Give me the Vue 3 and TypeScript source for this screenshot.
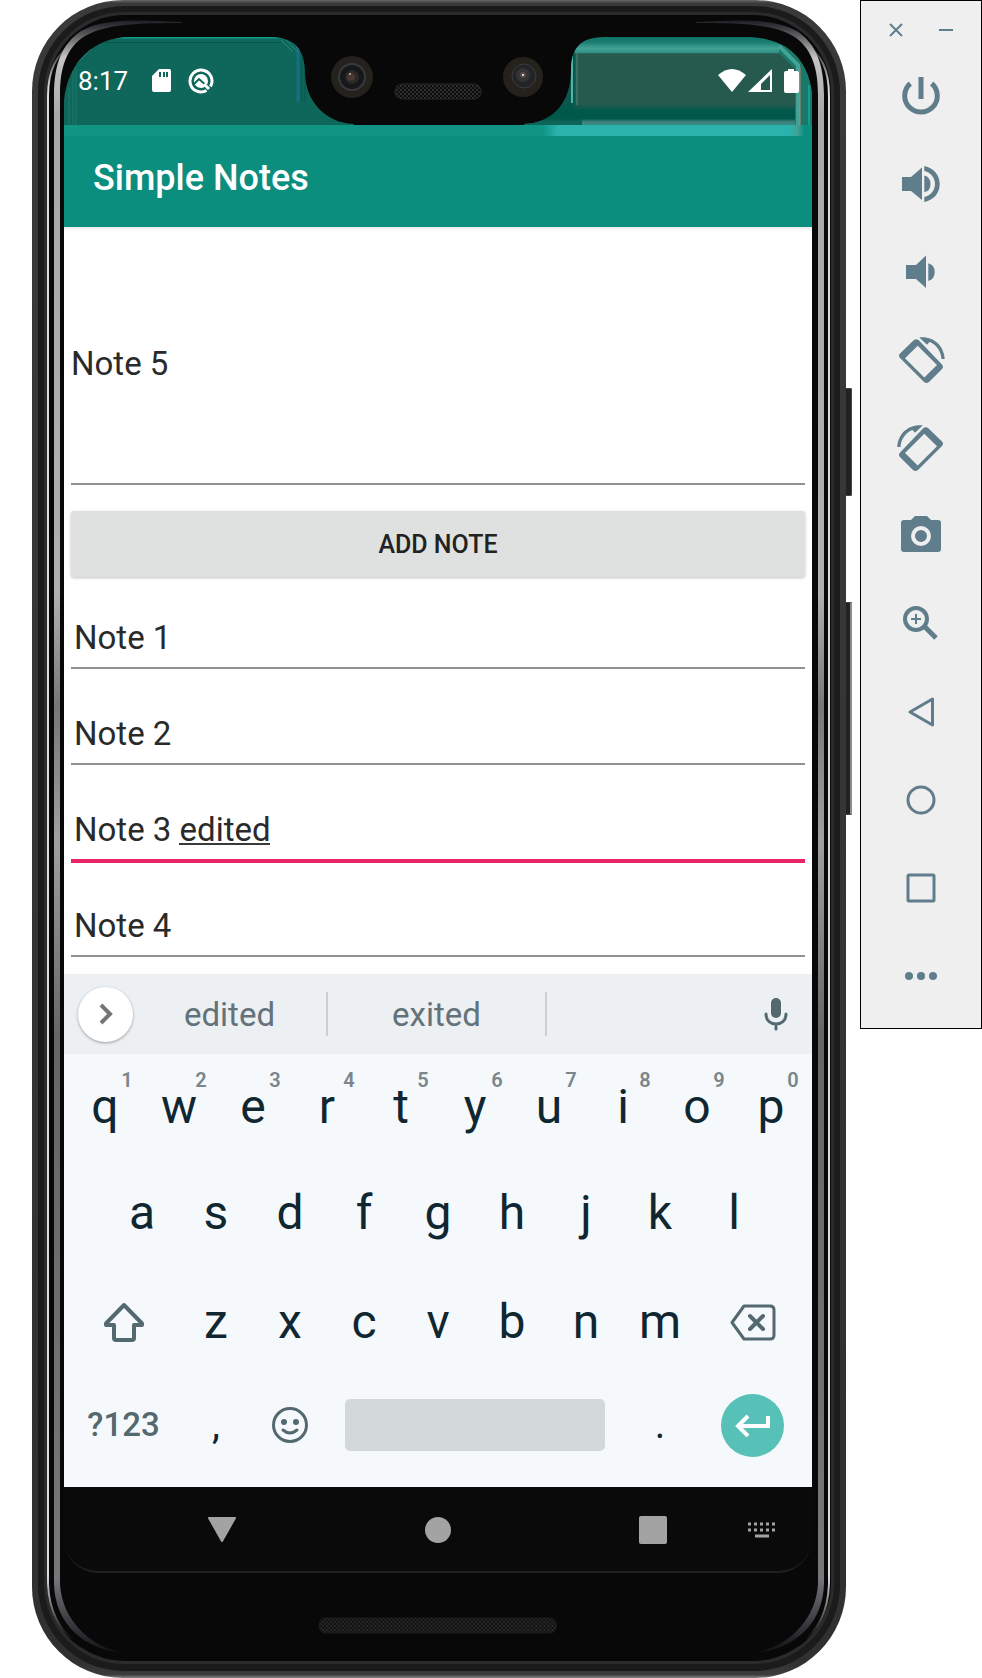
<script setup lang="ts">
import { ref } from 'vue'

interface Note {
  id: number
  text: string
  composing?: boolean
}

interface Key {
  label: string
  hint?: string
}

const draft = ref('Note 5')
const notes = ref<Note[]>([
  { id: 1, text: 'Note 1' },
  { id: 2, text: 'Note 2' },
  { id: 3, text: 'Note 3 edited', composing: true },
  { id: 4, text: 'Note 4' },
])

const topRow: Key[] = 'qwertyuiop'.split('').map((label, i) => ({ label, hint: String((i + 1) % 10) }))
const middleRow = 'asdfghjkl'.split('')
const bottomRow = 'zxcvbnm'.split('')

const tools = [
  'Power',
  'Volume up',
  'Volume down',
  'Rotate left',
  'Rotate right',
  'Take screenshot',
  'Zoom',
  'Back',
  'Home',
  'Overview',
  'More',
]

function addNote() {
  if (draft.value.trim()) {
    notes.value.push({ id: notes.value.length + 1, text: draft.value })
  }
}
</script>

<template>
  <div class="emulator">
    <div class="phone">
      <span class="side-button power-button"></span>
      <span class="side-button volume-button"></span>
      <svg class="bezel" viewBox="0 0 814 1678" preserveAspectRatio="none" aria-hidden="true">
        <defs>
          <linearGradient id="rim" gradientUnits="userSpaceOnUse" x1="0" y1="0" x2="0" y2="1678">
            <stop offset="0" stop-color="#686868" />
            <stop offset=".002" stop-color="#3a3a3a" />
            <stop offset=".99" stop-color="#303030" />
            <stop offset=".998" stop-color="#3c3c3c" />
            <stop offset="1" stop-color="#858585" />
          </linearGradient>
          <linearGradient id="shine" gradientUnits="userSpaceOnUse" x1="0" y1="18" x2="0" y2="1660">
            <stop offset="0" stop-color="#15151a" />
            <stop offset=".006" stop-color="#3a3a40" />
            <stop offset=".024" stop-color="#c4c4c4" />
            <stop offset=".06" stop-color="#a8a8a8" />
            <stop offset=".35" stop-color="#b0b0b0" />
            <stop offset=".42" stop-color="#777" />
            <stop offset=".5" stop-color="#a0a0a0" />
            <stop offset=".62" stop-color="#666" />
            <stop offset=".95" stop-color="#77777b" />
            <stop offset=".98" stop-color="#34343a" />
            <stop offset="1" stop-color="#08080a" />
          </linearGradient>
          <linearGradient id="edge" gradientUnits="userSpaceOnUse" x1="0" y1="40" x2="0" y2="1640">
            <stop offset="0" stop-color="#080808" />
            <stop offset=".03" stop-color="#ddd" />
            <stop offset=".96" stop-color="#ddd" />
            <stop offset="1" stop-color="#080808" />
          </linearGradient>
        </defs>
        <rect width="814" height="1678" rx="91" fill="url(#rim)" />
        <rect x="6" y="6" width="802" height="1665" rx="86" fill="#1b1b1b" />
        <rect x="12" y="12" width="790" height="1652" rx="80" fill="#2b2b2b" />
        <rect x="15" y="15" width="784" height="1646" rx="78" fill="#080808" />
        <path d="M44 40C24 54 16 70 16 96V1584C17 1612 28 1632 48 1646" fill="none" stroke="url(#edge)" stroke-width="2" />
        <path d="M770 40C790 54 797 70 797 96V1584C796 1612 786 1632 766 1646" fill="none" stroke="url(#edge)" stroke-width="2" />
        <path d="M150 22C105 20 72 18 49 31C30 44 22 64 22 95V1584C23 1624 52 1650 92 1653C58 1647 30 1620 28 1584V95C28 68 34 48 53 36C74 24 105 23 150 23Z" fill="url(#shine)" />
        <path d="M664 22C709 20 742 18 765 31C784 44 792 64 792 95V1584C791 1624 762 1650 722 1653C756 1647 784 1620 786 1584V95C786 68 780 48 761 36C740 24 709 23 664 23Z" fill="url(#shine)" />
      </svg>

      <div class="screen">
        <header class="status-bar">
          <svg class="cutout" viewBox="0 0 748 88" preserveAspectRatio="none" aria-hidden="true">
            <defs>
              <clipPath id="leftEar"><path d="M0 88V63C4 25 30 0 66 0H206C232 0 241 14 241 36C241 62 260 86 290 87V88Z" /></clipPath>
              <clipPath id="rightEar"><path d="M748 88V56C744 22 722 0 682 0H540C514 0 507 14 507 34C507 64 490 86 460 87V88Z" /></clipPath>
              <pattern id="mesh" width="4" height="4" patternUnits="userSpaceOnUse">
                <rect width="4" height="4" fill="#0c0c0c" />
                <circle cx="1" cy="1" r="1" fill="#3a3a3a" /><circle cx="3" cy="3" r="1" fill="#333" />
              </pattern>
              <linearGradient id="earRight" x1="0" y1="0" x2="0" y2="1">
                <stop offset="0" stop-color="#0f7468" />
                <stop offset=".06" stop-color="#1b7d70" />
                <stop offset=".09" stop-color="#2c8d80" />
                <stop offset=".13" stop-color="#43a294" />
                <stop offset=".18" stop-color="#2f8f82" />
                <stop offset=".19" stop-color="#265a4e" />
                <stop offset=".76" stop-color="#265a4e" />
                <stop offset=".84" stop-color="#00584b" />
                <stop offset=".93" stop-color="#00584b" />
                <stop offset=".96" stop-color="#3a8079" />
                <stop offset="1" stop-color="#3a8c86" />
              </linearGradient>
            </defs>
            <g clip-path="url(#leftEar)">
              <rect width="300" height="88" fill="#0f665a" />
              <path d="M0 .5H240" stroke="#0fa08f" stroke-width="2" />
              <path d="M20 5.500H217" stroke="#07574c" stroke-width="1" />
              <path d="M5 88V50M9 88V34M12 88V30" stroke="#1c7a6c" stroke-width="1" />
              <path d="M234 10V65" stroke="#147080" stroke-width="3" />
              <path d="M238 15V65M241 20V65" stroke="#07574c" stroke-width="1" />
              <path d="M217 3L229 15M222 3L234 15M227 3L238 15" stroke="#238a7c" stroke-width="1" />
              <path d="M9 30L31 8" stroke="#2a7d70" stroke-width="1" />
            </g>
            <g clip-path="url(#rightEar)">
              <rect x="450" width="298" height="88" fill="url(#earRight)" />
              <path d="M450 88V0H511V70L518 74V88Z" fill="#00584b" opacity=".75" />
              <path d="M508 18V66" stroke="#52b3a6" stroke-width="2" />
              <path d="M513 16V68" stroke="#3c6e62" stroke-width="2" />
              <path d="M715 16L731 32V88H748V0H715Z" fill="#18786b" />
              <path d="M715 9L734 28V88" fill="none" stroke="#43a294" stroke-width="4" />
              <path d="M736 30V88" stroke="#b5866f" stroke-width="1" />
              <path d="M745 48V88" stroke="#0ac6b6" stroke-width="1" />
            </g>
            <circle cx="288" cy="40" r="21" fill="#25211c" />
            <circle cx="288" cy="40" r="13" fill="#17181a" stroke="#38393d" stroke-width="2" />
            <circle cx="288" cy="40" r="7" fill="#2b2928" />
            <circle cx="287" cy="40" r="4" fill="#4a3830" /><circle cx="286" cy="37" r="1" fill="#bba" />
            <circle cx="459" cy="40" r="20" fill="#25211c" />
            <circle cx="460" cy="39" r="12" fill="#222427" stroke="#3a3b3e" stroke-width="1" />
            <circle cx="459" cy="38" r="7" fill="#343335" />
            <circle cx="459" cy="38" r="3" fill="#5a4a44" /><circle cx="459" cy="38" r="1" fill="#fff" />
            <rect x="331" y="47" width="86" height="15" rx="7" fill="url(#mesh)" stroke="#262626" />
          </svg>
          <time class="clock">8:17</time>
          <svg class="status-icon" viewBox="0 0 20 24" width="20" height="24" aria-hidden="true">
            <path d="M7 0H17Q19 0 19 2V21Q19 23 17 23H2Q0 23 0 21V7Z" fill="#fff" />
            <path d="M7 3H9V8H7ZM11 3H13V8H11ZM14 3H16V8H14Z" fill="#0f665a" />
          </svg>
          <svg class="status-icon sync" viewBox="0 0 26 26" width="26" height="26" aria-hidden="true">
            <path d="M18.500 22.500A11 11 0 1 1 22.500 18.500" fill="none" stroke="#fff" stroke-width="3" />
            <circle cx="13" cy="13" r="7" fill="#fff" />
            <path d="M5 17L11 11L20 19" fill="none" stroke="#0f665a" stroke-width="2" />
            <path d="M16 16L21 21" stroke="#fff" stroke-width="3" />
          </svg>
          <svg class="status-icon signals" viewBox="0 0 81 24" width="81" height="24" aria-hidden="true">
            <path d="M0 6Q14 -6 28 6L14 23Z" fill="#fff" />
            <path d="M54 0V23H30Z" fill="#fff" />
            <path d="M52 6V21H43V15Z" fill="#265a4e" />
            <path d="M70 0H76V2H79Q81 2 81 4V22Q81 24 79 24H68Q66 24 66 22V4Q66 2 68 2H70Z" fill="#fff" />
          </svg>
        </header>

        <div class="app-bar">
          <h1>Simple Notes</h1>
        </div>

        <main class="notes">
          <input v-model="draft" class="draft" type="text" aria-label="New note" />
          <button class="add" type="button" @click="addNote">ADD NOTE</button>
          <ul class="list">
            <li v-for="note in notes" :key="note.id" class="row" :class="{ composing: note.composing }">
              <input v-model="note.text" class="note" type="text" :aria-label="'Note ' + note.id" />
              <span v-if="note.composing" class="composing-line"></span>
            </li>
          </ul>
        </main>

        <section class="keyboard" aria-label="Keyboard">
          <div class="suggestions">
            <button class="expand" type="button" aria-label="More tools">
              <svg viewBox="0 0 14 22" width="14" height="22"><path d="M2 2L11 11L2 20" fill="none" stroke="#757575" stroke-width="4" /></svg>
            </button>
            <button class="suggestion" type="button">edited</button>
            <button class="suggestion" type="button">exited</button>
            <button class="mic" type="button" aria-label="Voice input">
              <svg viewBox="0 0 24 34" width="24" height="34">
                <rect x="7" y="1" width="10" height="20" rx="5" fill="#546870" />
                <path d="M2 17C2 24 7 27 12 27S22 24 22 17M12 27V32" fill="none" stroke="#546870" stroke-width="3" stroke-linecap="round" />
              </svg>
            </button>
          </div>
          <div class="keys">
            <div class="key-row">
              <button v-for="key in topRow" :key="key.label" class="key" type="button">
                {{ key.label }}<sup class="hint">{{ key.hint }}</sup>
              </button>
            </div>
            <div class="key-row middle">
              <button v-for="key in middleRow" :key="key" class="key" type="button">{{ key }}</button>
            </div>
            <div class="key-row third">
              <button class="key wide" type="button" aria-label="Shift">
                <svg viewBox="0 0 42 42" width="42" height="42">
                  <path d="M21 4L39 22.500V24H31V37Q31 39 29 39H13Q11 39 11 37V24H3V22.500Z" fill="none" stroke="#546870" stroke-width="4" stroke-linejoin="round" />
                </svg>
              </button>
              <button v-for="key in bottomRow" :key="key" class="key" type="button">{{ key }}</button>
              <button class="key wide" type="button" aria-label="Backspace">
                <svg viewBox="0 0 46 38" width="46" height="38">
                  <path d="M14 3H40Q44 3 44 7V32Q44 36 40 36H14L2 19.500Z" fill="none" stroke="#546870" stroke-width="3" stroke-linejoin="round" />
                  <path d="M20 13L33 26M33 13L20 26" stroke="#546870" stroke-width="4" stroke-linecap="round" />
                </svg>
              </button>
            </div>
            <div class="key-row">
              <button class="key wide symbols" type="button">?123</button>
              <button class="key punctuation" type="button">,</button>
              <button class="key" type="button" aria-label="Emoji">
                <svg viewBox="0 0 38 38" width="38" height="38">
                  <circle cx="19" cy="19" r="16.500" fill="none" stroke="#546870" stroke-width="3" />
                  <circle cx="13" cy="16" r="3" fill="#546870" /><circle cx="25" cy="16" r="3" fill="#546870" />
                  <path d="M12 24Q19 30 26 24" fill="none" stroke="#546870" stroke-width="3" stroke-linecap="round" />
                </svg>
              </button>
              <button class="key space" type="button" aria-label="Space"><span class="space-bar"></span></button>
              <button class="key punctuation" type="button">.</button>
              <button class="key wide" type="button" aria-label="Enter">
                <span class="enter">
                  <svg viewBox="0 0 36 24" width="36" height="24"><path d="M13 3L3 13L13 23M4 13H33V3" fill="none" stroke="#fff" stroke-width="4" /></svg>
                </span>
              </button>
            </div>
          </div>
        </section>

        <nav class="nav-bar" aria-label="System navigation">
          <button class="nav back" type="button" aria-label="Hide keyboard">
            <svg viewBox="0 0 30 26" width="30" height="26"><path d="M2 1H28L15 24Z" fill="#a3a3a3" stroke="#a3a3a3" stroke-width="2" stroke-linejoin="round" /></svg>
          </button>
          <button class="nav home" type="button" aria-label="Home">
            <svg viewBox="0 0 28 28" width="28" height="28"><circle cx="14" cy="14" r="13" fill="#a3a3a3" /></svg>
          </button>
          <button class="nav recents" type="button" aria-label="Recent apps">
            <svg viewBox="0 0 28 28" width="28" height="28"><rect width="28" height="28" rx="2" fill="#a3a3a3" /></svg>
          </button>
          <button class="nav switcher" type="button" aria-label="Switch keyboard">
            <svg viewBox="0 0 28 16" width="28" height="16">
              <path d="M0 2H28M0 8H28" stroke="#a3a3a3" stroke-width="3" stroke-dasharray="3 3" />
              <path d="M7 14H21" stroke="#a3a3a3" stroke-width="3" />
            </svg>
          </button>
        </nav>
      </div>

      <div class="chin">
        <svg class="speaker" viewBox="0 0 238 17" preserveAspectRatio="none" aria-hidden="true">
          <defs>
            <pattern id="grille" width="4" height="4" patternUnits="userSpaceOnUse">
              <rect width="4" height="4" fill="#111" />
              <circle cx="1" cy="1" r="1" fill="#2e2e2e" /><circle cx="3" cy="3" r="1" fill="#2a2a2a" />
            </pattern>
          </defs>
          <rect x="1" y="1" width="236" height="15" rx="7" fill="url(#grille)" stroke="#1c1c1c" />
        </svg>
      </div>
    </div>

    <aside class="toolbar" aria-label="Emulator controls">
      <div class="window-controls">
        <button type="button" aria-label="Close">
          <svg viewBox="0 0 14 14" width="14" height="14"><path d="M1 1L13 13M13 1L1 13" stroke="#607d8b" stroke-width="2" /></svg>
        </button>
        <button type="button" aria-label="Minimize">
          <svg viewBox="0 0 14 14" width="14" height="14"><path d="M0 7H14" stroke="#607d8b" stroke-width="2" /></svg>
        </button>
      </div>
      <button v-for="tool in tools" :key="tool" class="tool" type="button" :aria-label="tool">
        <svg viewBox="0 0 50 50" width="50" height="50" fill="#607d8b" stroke="none">
          <path v-if="tool === 'Power'" d="M14.300 12.500A16.300 16.300 0 1 0 35.700 12.500M25 6V28" fill="none" stroke="#607d8b" stroke-width="5" />
          <path v-else-if="tool === 'Volume up'" d="M6 18H15L26 8.500V41L15 32H6ZM28.300 16.500Q34.500 18 34.500 25T28.300 33ZM28.300 7C38 9 43.700 16 43.700 25S38 41 28.300 43V38C35 36.500 39 31 39 25S35 13.500 28.300 12Z" />
          <path v-else-if="tool === 'Volume down'" d="M10 18H20L30 8.500V41L20 32H10ZM32.300 16.300Q38.700 18 38.700 25T32.300 34Z" />
          <g v-else-if="tool === 'Rotate left' || tool === 'Rotate right'" :transform="tool === 'Rotate right' ? 'matrix(-1 0 0 1 50 0)' : undefined">
            <path fill-rule="evenodd" d="M18 5Q20 3.500 22.500 5L46 29.500Q48 32 46 34L33 47Q30.500 49 28 47L4 23Q2 20.500 4 18.500ZM21.700 10.700L9 23.300L28.300 42.500L41 30Z" />
            <path d="M23.300 2.500C38 1 48 11 48.700 24H45.500C45 16 40 9.500 33.500 7L31 9.700Z" />
          </g>
          <g v-else-if="tool === 'Take screenshot'">
            <path d="M15 9L19 5H31L35 9H42Q45 9 45 12V38Q45 41 42 41H8Q5 41 5 38V12Q5 9 8 9Z" />
            <circle cx="25" cy="25" r="8" fill="none" stroke="#efefef" stroke-width="4" />
          </g>
          <g v-else-if="tool === 'Zoom'" fill="none" stroke="#607d8b">
            <circle cx="20" cy="20" r="11" stroke-width="4" />
            <path d="M20 15V25M15 20H25" stroke-width="2" />
            <path d="M28 27L40 39" stroke-width="5" />
          </g>
          <path v-else-if="tool === 'Back'" d="M14 25L36.500 12V38Z" fill="none" stroke="#607d8b" stroke-width="3" stroke-linejoin="round" />
          <circle v-else-if="tool === 'Home'" cx="25" cy="25" r="13" fill="none" stroke="#607d8b" stroke-width="3" />
          <rect v-else-if="tool === 'Overview'" x="12" y="12" width="26" height="26" rx="1" fill="none" stroke="#607d8b" stroke-width="3" />
          <g v-else><circle cx="13" cy="25" r="4" /><circle cx="25" cy="25" r="4" /><circle cx="37" cy="25" r="4" /></g>
        </svg>
      </button>
    </aside>
  </div>
</template>

<style>
body {
  margin: 0;
  background: #fff;
}
</style>

<style scoped>
.emulator {
  display: flex;
  align-items: flex-start;
  gap: 14px;
  padding-left: 32px;
  font-family: Roboto, 'Noto Sans', sans-serif;
}

button,
input {
  margin: 0;
  padding: 0;
  border: 0;
  border-radius: 0;
  background: none;
  font: inherit;
  color: inherit;
}

button {
  display: flex;
  align-items: center;
  justify-content: center;
  cursor: pointer;
}

svg {
  display: block;
}

.phone {
  position: relative;
  flex: 1;
  min-width: 0;
  box-sizing: border-box;
  padding: 37px 34px 0 32px;
}

.bezel {
  position: absolute;
  inset: 0;
  width: 100%;
  height: 100%;
}

.side-button {
  position: absolute;
  right: -6px;
  width: 8px;
  box-sizing: border-box;
  border: 1px solid #444;
  border-radius: 1px;
  background: #222;
}

.power-button {
  top: 388px;
  height: 108px;
}

.volume-button {
  top: 602px;
  height: 213px;
  border-right: 2px solid #8c8c8c;
}

.screen {
  position: relative;
}

.status-bar {
  position: relative;
  display: flex;
  align-items: center;
  box-sizing: border-box;
  height: 88px;
  padding: 0 13px 0 14px;
  color: #fff;
}

.cutout {
  position: absolute;
  inset: 0;
  width: 100%;
  height: 100%;
}

.clock {
  position: relative;
  font-size: 26px;
  line-height: 30px;
}

.status-icon {
  position: relative;
  margin-left: 24px;
}

.sync {
  margin-left: 16px;
}

.signals {
  margin-left: auto;
}

.app-bar {
  padding: 32px 29px 28px;
  background: linear-gradient(to right, #109484 64%, #2cb2ad 66%, #2cb2ad 97%, #43a294 98%, #0c8e7f 99%) 0 0 / 100% 11px no-repeat #0c8e7f;
  color: #fff;
}

.app-bar h1 {
  margin: 0;
  font-size: 36px;
  line-height: 42px;
  font-weight: 500;
}

.notes {
  display: flex;
  flex-direction: column;
  padding: 0 7px 17px;
  background: linear-gradient(#ececec, #fff) 0 0 / 100% 5px no-repeat #fff;
  color: #2a2a2a;
  font-size: 33px;
}

.draft,
.note {
  display: block;
  box-sizing: content-box;
  width: 100%;
  height: 38px;
  line-height: 38px;
  border-bottom: 2px solid #909090;
  outline: none;
}

.draft {
  padding: 118px 0 100px;
}

.add {
  margin-top: 26px;
  height: 66px;
  border-radius: 3px;
  background: #dfe1e0;
  box-shadow: 0 1px 3px rgba(0, 0, 0, 0.25);
  font-size: 25px;
  font-weight: 500;
  color: #222;
}

.list {
  display: flex;
  flex-direction: column;
  gap: 4px;
  margin: 0;
  padding: 0;
  list-style: none;
}

.row {
  position: relative;
}

.note {
  box-sizing: border-box;
  height: 92px;
  padding: 41px 3px 11px;
}

.composing .note {
  height: 94px;
  margin-bottom: -2px;
  border-bottom: 4px solid #e72467;
}

.composing-line {
  position: absolute;
  left: 108px;
  top: 74px;
  width: 91px;
  height: 2px;
  background: #3a3a3a;
}

.keyboard {
  background: #f5f9fc;
  color: #102731;
}

.suggestions {
  display: grid;
  grid-template-columns: 69fr 195fr 219fr 265fr;
  height: 80px;
  align-items: center;
  background: #ecf0f3;
}

.expand {
  justify-self: end;
  width: 55px;
  height: 55px;
  border-radius: 50%;
  background: #fff;
  box-shadow: 0 1px 3px rgba(0, 0, 0, 0.35);
}

.suggestion {
  height: 44px;
  border-right: 2px solid #cbcfd2;
  font-size: 33px;
  color: #647279;
}

.mic {
  justify-self: end;
  margin-right: 24px;
}

.keys {
  padding: 0 4px 9px;
}

.key-row {
  display: flex;
}

.middle {
  padding: 0 37px;
}

.key {
  position: relative;
  flex: 74 1 0;
  min-width: 0;
  height: 106px;
  font-size: 48px;
  line-height: 56px;
}

.third .key {
  padding-top: 5px;
}

.wide {
  flex-grow: 111;
}

.hint {
  position: absolute;
  left: 50%;
  top: 14px;
  width: 44px;
  text-align: center;
  font-size: 20px;
  line-height: 24px;
  font-weight: 600;
  color: #7a868b;
}

.symbols {
  font-size: 33px;
  font-weight: 500;
  color: #546870;
}

.punctuation {
  font-size: 40px;
}

.space {
  flex-grow: 296;
}

.space-bar {
  flex: 1;
  margin: 0 18px;
  height: 52px;
  border-radius: 5px;
  background: #d3d8db;
}

.enter {
  display: grid;
  place-items: center;
  width: 63px;
  height: 63px;
  border-radius: 50%;
  background: #57c0b7;
}

.nav-bar {
  display: grid;
  grid-template-columns: 50fr 216fr 216fr 54fr 106fr 106fr;
  height: 86px;
  box-sizing: border-box;
  padding-top: 2px;
  border-bottom: 2px solid #1f1f1f;
  border-radius: 0 0 34px 34px;
  background: #0a0a0a;
}

.back {
  grid-column: 2;
}

.home {
  grid-column: 3;
}

.recents {
  grid-column: 5;
}

.switcher {
  grid-column: 6;
  padding-left: 6px;
}

.chin {
  position: relative;
  display: flex;
  justify-content: center;
  padding: 44px 0;
}

.speaker {
  width: 32%;
  height: 17px;
}

.toolbar {
  flex: none;
  box-sizing: border-box;
  width: 122px;
  padding-bottom: 8px;
  border: 1px solid #000;
  background: #efefef;
}

.window-controls {
  display: flex;
  align-items: center;
  justify-content: center;
  gap: 36px;
  height: 51px;
  padding-top: 7px;
  box-sizing: border-box;
}

.tool {
  width: 100%;
  height: 88px;
}
</style>
